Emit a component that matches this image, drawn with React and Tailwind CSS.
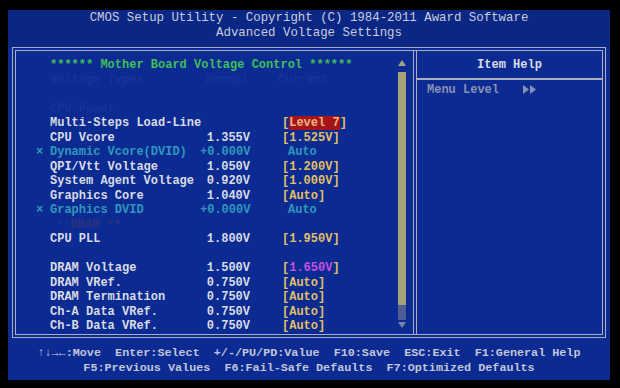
import React from "react";

const mono = { fontFamily: '"Liberation Mono", "DejaVu Sans Mono", monospace' };

// one row of the voltage table
function Row({ mark, name, value, opt, kind }) {
  let optNode = null;
  if (kind === "sel") {
    optNode = (
      <span className="text-[#e2bf66]">
        [<span className="bg-[#a3151a] text-[#f2b27c]">Level 7</span>]
      </span>
    );
  } else if (kind === "auto") {
    optNode = <span className="pl-[6px] text-[#2f97bd]">{opt}</span>;
  } else if (kind === "pink") {
    optNode = (
      <span className="text-[#e2bf66]">
        [<span className="text-[#c64fe0]">{opt}</span>]
      </span>
    );
  } else if (opt) {
    optNode = <span className="text-[#e2bf66]">[{opt}]</span>;
  }
  const dim = kind === "auto";
  return (
    <div className="flex h-[14.5px] items-center whitespace-nowrap">
      <span className="w-[14px] text-[#2f97bd]">{mark}</span>
      <span className={"w-[150px] " + (dim ? "text-[#2f97bd]" : "text-[#d9dbe6]")}>{name}</span>
      <span className={"w-[50px] text-right " + (dim ? "text-[#2f97bd]" : "text-[#d9dbe6]")}>{value}</span>
      <span className="w-[32px]" />
      {optNode}
    </div>
  );
}

const items = [
  { name: "Multi-Steps Load-Line", kind: "sel" },
  { name: "CPU Vcore", value: "1.355V", opt: "1.525V" },
  { mark: "×", name: "Dynamic Vcore(DVID)", value: "+0.000V", opt: "Auto", kind: "auto" },
  { name: "QPI/Vtt Voltage", value: "1.050V", opt: "1.200V" },
  { name: "System Agent Voltage", value: "0.920V", opt: "1.000V" },
  { name: "Graphics Core", value: "1.040V", opt: "Auto" },
  { mark: "×", name: "Graphics DVID", value: "+0.000V", opt: "Auto", kind: "auto" },
];

const dram = [
  { name: "DRAM Voltage", value: "1.500V", opt: "1.650V", kind: "pink" },
  { name: "DRAM VRef.", value: "0.750V", opt: "Auto" },
  { name: "DRAM Termination", value: "0.750V", opt: "Auto" },
  { name: "Ch-A Data VRef.", value: "0.750V", opt: "Auto" },
  { name: "Ch-B Data VRef.", value: "0.750V", opt: "Auto" },
];

export default function App() {
  return (
    <div className="w-[620px] h-[388px] bg-black overflow-hidden pt-[10px] pl-[8px]" style={mono}>
      <div className="w-[602px] h-[370px] bg-[#0b2b92] flex flex-col">
        {/* title */}
        <div className="h-[37px] pt-[1px] text-[12.4px] leading-[15px] text-[#c9ccdb] text-center bg-[#0a2786]">
          <div>CMOS Setup Utility - Copyright (C) 1984-2011 Award Software</div>
          <div>Advanced Voltage Settings</div>
        </div>

        {/* main frame */}
        <div className="mx-[4px] h-[291px] border-4 border-double border-[#a9adc2] flex text-[12px] font-bold">
          {/* left panel */}
          <div className="w-[397px] flex">
            <div className="flex-1 pl-[20px] pt-[7px]">
              <div className="h-[14.5px] flex items-center pl-[14px] text-[#3fbf5a] whitespace-nowrap">
                ****** Mother Board Voltage Control ******
              </div>
              <div className="h-[14.5px] flex items-center pl-[14px] text-[#15329e] whitespace-nowrap">
                <span className="w-[155px]">Voltage Types</span>
                <span className="w-[73px]">Normal</span>
                <span>Current</span>
              </div>
              <div className="h-[14.5px]" />
              <div className="h-[14.5px] flex items-center pl-[14px] text-[#15329e]">CPU Power</div>
              {items.map((r, i) => (
                <Row key={i} {...r} />
              ))}
              <div className="h-[14.5px] flex items-center pl-[20px] whitespace-nowrap">
                <span className="text-[#15329e]">** </span>
                <span className="text-[#2c3080]">DRAM **</span>
              </div>
              <Row name="CPU PLL" value="1.800V" opt="1.950V" />
              <div className="h-[14.5px]" />
              {dram.map((r, i) => (
                <Row key={i} {...r} />
              ))}
            </div>
            {/* scroll bar */}
            <div className="w-[8px] mr-[7px] pt-[9px] flex flex-col items-center">
              <svg width="8" height="6" viewBox="0 0 8 6">
                <path d="M4 0 L8 6 L0 6 Z" fill="#a9a37a" />
              </svg>
              <div className="mt-[6px] w-[8px] h-[248px] bg-[#4f5c96] flex flex-col">
                <div className="h-[233px] bg-[#aaa277]" />
              </div>
              <svg className="mt-[2px]" width="8" height="6" viewBox="0 0 8 6">
                <path d="M0 0 L8 0 L4 6 Z" fill="#7d83a8" />
              </svg>
            </div>
          </div>

          {/* right panel */}
          <div className="flex-1 border-l-4 border-double border-[#a9adc2] flex flex-col">
            <div className="h-[29px] pt-[1px] border-b-2 border-[#a9adc2] flex items-center justify-center text-[#d9dbe6]">
              Item Help
            </div>
            <div className="pl-[10px] pt-[5px] h-[14.5px] flex items-center text-[#8a90b4] font-normal whitespace-nowrap">
              <span className="font-bold">Menu Level</span>
              <span className="ml-[24px] flex">
                <svg width="14" height="9" viewBox="0 0 14 9">
                  <path d="M0 0 L6 4.5 L0 9 Z M7 0 L13 4.5 L7 9 Z" fill="#8a90b4" />
                </svg>
              </span>
            </div>
          </div>
        </div>

        {/* footer */}
        <div className="pt-[8px] text-[11.75px] leading-[15px] text-[#c2c6da] text-center font-bold whitespace-pre">
          <div>↑↓→←:Move  Enter:Select  +/-/PU/PD:Value  F10:Save  ESC:Exit  F1:General Help</div>
          <div>F5:Previous Values  F6:Fail-Safe Defaults  F7:Optimized Defaults</div>
        </div>
      </div>
    </div>
  );
}
